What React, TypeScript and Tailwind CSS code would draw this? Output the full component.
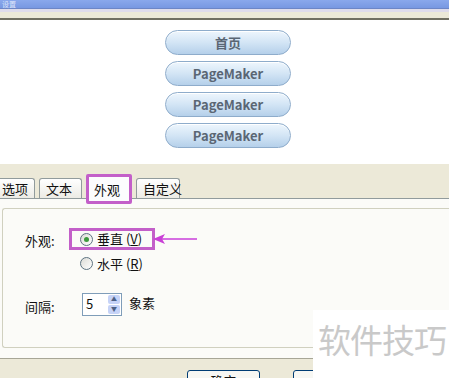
import type { ReactNode } from "react"

const font = { fontFamily: '"Noto Sans CJK SC", "Liberation Sans", sans-serif' }

function PreviewButton({ children }: { children: ReactNode }) {
  return (
    <div className="flex h-[25px] w-[126px] items-center justify-center rounded-full border border-[#8eaccb] bg-gradient-to-b from-[#eef6fd] via-[#d3e5f5] to-[#b5d0ea] text-[13px] font-bold text-[#5a6674] shadow-[inset_0_1px_0_#ffffff]">
      {children}
    </div>
  )
}

function Tab({ label, active, className }: { label: string; active?: boolean; className?: string }) {
  if (active) {
    return (
      <div className={`relative z-10 flex h-[30px] items-start whitespace-nowrap rounded-[2px] border-[3px] border-[#c35fc9] bg-[#fcfcfe] px-[5px] pt-[3px] text-[13px] text-[#111] ${className ?? ""}`}>
        {label}
      </div>
    )
  }
  return (
    <div className={`mt-[4px] flex h-[20px] items-center whitespace-nowrap rounded-t-[3px] border border-b-0 border-[#919b9c] bg-gradient-to-b from-[#ffffff] to-[#ecebe5] px-[6px] text-[13px] text-[#111] ${className ?? ""}`}>
      {label}
    </div>
  )
}

function Radio({ checked }: { checked?: boolean }) {
  return (
    <span className="flex h-[13px] w-[13px] items-center justify-center rounded-full border border-[#5d7381] bg-gradient-to-br from-[#dcdcd6] to-[#ffffff]">
      {checked && <span className="h-[5px] w-[5px] rounded-full bg-[#3d9a3d]" />}
    </span>
  )
}

export default function App() {
  return (
    <div className="relative h-[378px] w-[449px] overflow-hidden bg-[#ece9d8] text-[#111]" style={font}>
      {/* title bar */}
      <div className="h-[9px] border-b border-[#6d86c6] bg-gradient-to-b from-[#8aa8ec] to-[#7898e2] pl-[2px] text-[7px] leading-[8px] text-[#dfe6fa]">
        设置
      </div>
      <div className="h-[3px] bg-[#dedcec]" />
      <div className="h-[6px] bg-[#ebe9d8]" />
      <div className="h-[2px] bg-[#6f6f62]" />

      {/* preview */}
      <div className="flex h-[144px] flex-col items-center gap-[6px] bg-white pt-[10px] pl-[7px]">
        <PreviewButton>首页</PreviewButton>
        <PreviewButton>PageMaker</PreviewButton>
        <PreviewButton>PageMaker</PreviewButton>
        <PreviewButton>PageMaker</PreviewButton>
      </div>

      {/* tabs */}
      <div className="mt-[10px] flex h-[24px] items-start gap-[4px]">
        <Tab label="选项" className="ml-[-10px] w-[45px] justify-end" />
        <Tab label="文本" className="w-[43px]" />
        <Tab label="外观" active className="w-[46px]" />
        <Tab label="自定义" className="w-[44px]" />
      </div>

      {/* tab panel */}
      <div className="h-[160px] border-t border-[#919b9c] bg-[#fbfbf8] pt-[9px] pl-[2px]">
        <div className="relative h-[140px] rounded-l-[3px] border border-r-0 border-[#d0d0bf] bg-[#fbfbf8] pl-[22px] pt-[19px] text-[13px]">
          <div className="flex items-start">
            <span className="w-[44px] pt-[3px]">外观:</span>
            <div className="flex flex-col gap-[4px]">
              <div className="flex h-[22px] w-[86px] items-center gap-[4px] border-[3px] border-[#c35fc9] px-[8px]">
                <Radio checked />
                <span className="whitespace-nowrap">垂直 (<u>V</u>)</span>
              </div>
              <div className="flex items-center gap-[4px] px-[11px]">
                <Radio />
                <span className="whitespace-nowrap">水平 (<u>R</u>)</span>
              </div>
            </div>
          </div>

          <svg width="46" height="12" viewBox="0 0 46 12" className="absolute left-[150px] top-[24px]">
            <line x1="8" y1="6" x2="44" y2="6" stroke="#d66ee2" strokeWidth="2" />
            <polygon points="0,6 12,1 9,6 12,11" fill="#c93fd6" />
          </svg>

          <div className="mt-[19px] flex items-start">
            <span className="w-[57px] pt-[4px]">间隔:</span>
            <div className="flex h-[23px] w-[40px] items-center border border-[#7f9db9] bg-white pl-[3px]">
              <span className="flex-1 text-[13px]">5</span>
              <div className="flex h-full w-[14px] flex-col gap-px p-px">
                <span className="flex flex-1 items-center justify-center rounded-[2px] bg-[#c6d3f7] text-[6px] leading-none text-[#4d6185]">▲</span>
                <span className="flex flex-1 items-center justify-center rounded-[2px] bg-[#c6d3f7] text-[6px] leading-none text-[#4d6185]">▼</span>
              </div>
            </div>
            <span className="ml-[7px]">象素</span>
          </div>
        </div>
      </div>

      {/* bottom */}
      <div className="h-[12px] border-t border-[#a7a696] bg-[#ece9d8]" />
      <div className="flex gap-[33px] pl-[187px]">
        <div className="h-[24px] w-[73px] rounded-[3px] border border-[#003c74] bg-[#f7f7f3] pt-[2px] text-center text-[13px] leading-[16px]">确定</div>
        <div className="h-[24px] w-[73px] rounded-[3px] border border-[#003c74] bg-[#f7f7f3] pt-[2px] text-center text-[13px] leading-[16px]">取消</div>
      </div>

      {/* watermark */}
      <div className="absolute left-[313px] top-[310px] flex h-[68px] w-[136px] items-start bg-white pl-[5px] pt-[8px] text-[33px] leading-[42px] tracking-[-1px] text-[#c9c9c9]">
        软件技巧
      </div>
    </div>
  )
}
